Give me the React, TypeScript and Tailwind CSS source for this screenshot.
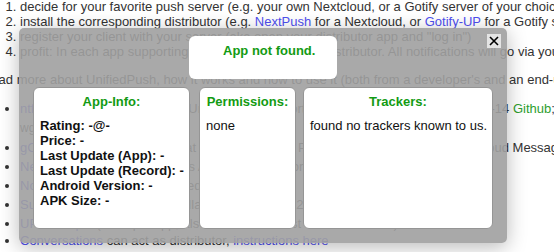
import React from 'react';

const green = 'text-[#139b13]';

const InfoCard = ({
  title,
  width,
  children,
}: {
  title: string;
  width: string;
  children: React.ReactNode;
}) => (
  <div className={`${width} h-[142px] shrink-0 rounded-[6px] border border-[#959595] bg-white px-[6px] pt-[6px]`}>
    <div className={`text-center font-bold ${green}`}>{title}</div>
    <div className="mt-[9px]">{children}</div>
  </div>
);

export default function App() {
  return (
    <div className="relative w-[554px] h-[252px] overflow-hidden bg-white whitespace-nowrap font-['Liberation_Sans',Arial,sans-serif] text-[13px] leading-[15px] text-[#333]">
      <ol className="list-decimal pl-[20px] -mt-[1px]">
        <li>decide for your favorite push server (e.g. your own Nextcloud, or a Gotify server of your choice)</li>
        <li>
          install the corresponding distributor (e.g. <a className="text-[#4f4ff0]">NextPush</a> for a Nextcloud, or{' '}
          <a className="text-[#4f4ff0]">Gotify-UP</a> for a Gotify server)
        </li>
        <li>register your client with your server (aka open your distributor app and "log in")</li>
        <li>profit: In each app supporting UnifiedPush, pick your distributor. All notifications will go via your server</li>
      </ol>

      <p className="mt-[13px] -ml-[18px]">
        Read more about UnifiedPush, how it works and how to use it (both from a developer's and an end-user's perspective)
      </p>

      <ul className="list-disc pl-[20px] mt-[12px] leading-[19px]">
        <li>
          <a className="text-[#4f4ff0]">ntfy</a> (a server and distributor, UnifiedPush support since v1.20.0 released 2022-05-14{' '}
          <a className="text-[#2e9e2e]">Github</a>; see docs)
          <br />
          <span className="text-[12px]">wget and more</span>
        </li>
        <li>
          <a className="text-[#4f4ff0]">gCompat-UP</a> (a distributor that replaces Google Play Services for the Firebase Cloud Messaging)
        </li>
        <li>
          <a className="text-[#4f4ff0]">NextPush</a> (Nextcloud app plus Android distributor)
        </li>
        <li>
          <a className="text-[#4f4ff0]">Noprovider2push</a> (a self-hosted rewrite server)
        </li>
        <li>
          <a className="text-[#4f4ff0]">Sunup</a> (distributor using Mozilla's autopush, 2022)
        </li>
        <li>
          <a className="text-[#4f4ff0]">UP-Example</a> (example app, also usable as a test for UnifiedPush)
        </li>
        <li className="leading-[15px]">
          <a className="text-[#4f4ff0]">Conversations</a> can act as distributor, <a className="text-[#4f4ff0]">instructions here</a>
        </li>
      </ul>

      <div className="absolute left-[19px] top-[28px] w-[488px] h-[215px] rounded-[5px] bg-[rgba(160,160,160,0.9)] shadow-[0_4px_20px_rgba(0,0,0,0.28)] flex flex-col items-center pt-[8px]">
        <button className="absolute right-[6px] top-[6px] w-[14px] h-[14px] bg-[#e4e4e4] flex items-center justify-center">
          <svg width="10" height="10" viewBox="0 0 10 10">
            <path d="M1 1L9 9M9 1L1 9" stroke="#000" strokeWidth="1.6" />
          </svg>
        </button>

        <div className="w-[148px] h-[43px] rounded-[6px] bg-white pl-[34px] pt-[7px]">
          <span className={`font-bold text-[13px] ${green}`}>App not found.</span>
        </div>

        <div className="flex mt-[8px] text-[#111]">
          <InfoCard title="App-Info:" width="w-[157px]">
            <div className="font-bold">
              <div>Rating: -@-</div>
              <div>Price: -</div>
              <div>Last Update (App): -</div>
              <div>Last Update (Record): -</div>
              <div>Android Version: -</div>
              <div>APK Size: -</div>
            </div>
          </InfoCard>
          <div className="w-[9px]" />
          <InfoCard title="Permissions:" width="w-[97px]">
            <div>none</div>
          </InfoCard>
          <div className="w-[7px]" />
          <InfoCard title="Trackers:" width="w-[190px]">
            <div>found no trackers known to us.</div>
          </InfoCard>
        </div>
      </div>
    </div>
  );
}
